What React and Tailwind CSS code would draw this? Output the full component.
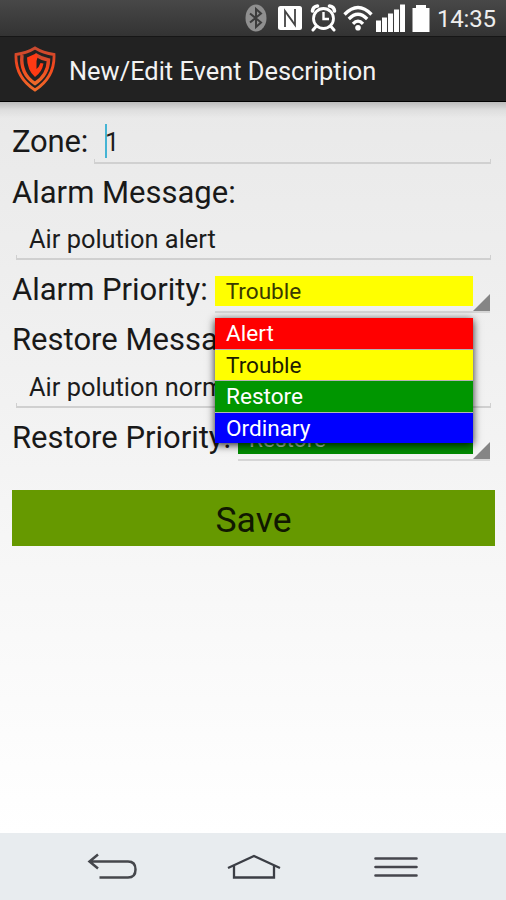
const options = [
  { label: 'Alert', className: 'bg-[#ff0000] text-white' },
  { label: 'Trouble', className: 'bg-[#ffff00] text-[#1c1c00]' },
  { label: 'Restore', className: 'bg-[#009600] text-white' },
  { label: 'Ordinary', className: 'bg-[#0000ff] text-white' },
];

const StatusBar = () => (
  <div className="flex h-9 items-center justify-end bg-gradient-to-b from-[#484848] to-[#333333] pr-[9px] text-white">
    {/* Bluetooth */}
    <svg className="mr-[10px] h-[28px] w-[22px]" viewBox="0 0 22 28">
      <ellipse cx="11" cy="14" rx="10.5" ry="13.5" fill="#8f8f8f" />
      <path d="M5 9.5 L16 18.5 L11 23 V5 L16 9.5 L5 18.5" fill="none" stroke="#3c3c3c" strokeWidth="2" />
    </svg>
    {/* NFC */}
    <svg className="mr-[7px] h-[26px] w-[26px]" viewBox="0 0 26 26">
      <rect x="1" y="1" width="24" height="24" rx="2.5" fill="#fff" />
      <path d="M8 22 V6 L16 17 M18 4 V20 L10 9" fill="none" stroke="#444444" strokeWidth="1.8" />
    </svg>
    {/* Alarm */}
    <svg className="mr-[6px] h-[28px] w-[27px]" viewBox="0 0 27 28" fill="none" stroke="#fff">
      <circle cx="13.5" cy="14.5" r="10" strokeWidth="2.8" />
      <path d="M13.5 8 V15 H19" strokeWidth="2.4" />
      <path d="M2.5 7 Q3 2.5 7.5 2 M24.5 7 Q24 2.5 19.5 2" strokeWidth="3.6" strokeLinecap="round" />
      <path d="M6 22.5 L3 26 M21 22.5 L24 26" strokeWidth="3" strokeLinecap="round" />
    </svg>
    {/* Wifi */}
    <svg className="mr-[3px] h-[26px] w-[30px]" viewBox="0 0 30 26" fill="none" stroke="#fff" strokeWidth="3.3">
      <path d="M1.5 9.5 Q15 -4.5 28.5 9.5" />
      <path d="M5.8 14 Q15 4.5 24.2 14" />
      <path d="M10 18.8 Q15 13.5 20 18.8" />
      <circle cx="15" cy="22.8" r="2.8" fill="#fff" stroke="none" />
    </svg>
    {/* Signal */}
    <svg className="mr-[7px] h-[28px] w-[29px]" viewBox="0 0 28 28" preserveAspectRatio="none" fill="#fff">
      <rect x="0" y="16.5" width="4.8" height="11.5" />
      <rect x="5.8" y="13.5" width="4.8" height="14.5" />
      <rect x="11.6" y="9.5" width="4.8" height="18.5" />
      <rect x="17.4" y="5.5" width="4.8" height="22.5" />
      <rect x="23.2" y="0.5" width="4.8" height="27.5" />
    </svg>
    {/* Battery */}
    <svg className="mr-[7px] h-[27px] w-[18px]" viewBox="0 0 18 27" fill="#fff">
      <rect x="4" y="0" width="10" height="5" />
      <rect x="0.5" y="3" width="17" height="24" />
    </svg>
    <span className="w-[60px] pt-0.5 text-[24px] leading-8 tracking-[-0.2px] whitespace-nowrap text-[#eeeeee]">14:35</span>
  </div>
);

const ActionBar = () => (
  <div className="flex h-[66px] items-center border-t border-b border-t-[#161616] border-b-black bg-[#222222] pl-[14px]">
    <svg className="mr-[13px] h-[46px] w-[42px]" viewBox="0 0 42 46" fill="none">
      <defs>
        <linearGradient id="shield" x1="0" y1="0" x2="0" y2="1">
          <stop offset="0" stopColor="#c84a30" />
          <stop offset="0.45" stopColor="#f4471d" />
          <stop offset="1" stopColor="#ee6a2a" />
        </linearGradient>
      </defs>
      <path d="M21 2 Q29 7 40 8.5 Q41 31 21 44 Q1 31 2 8.5 Q13 7 21 2 Z" stroke="url(#shield)" strokeWidth="2.8" />
      <path d="M8 9 Q6 28 21 37.5 Q34 29 34.5 14 Q27 12.5 21 8.5" stroke="url(#shield)" strokeWidth="3.4" />
      <path d="M22 7.5 L13 11.5 Q13 24 21 31 Q28 26 29.5 17.5 L26.5 17 Q25 21 22.5 23 V15 L24 10 Z" fill="#ff3a14" />
    </svg>
    <h1 className="pt-[3px] text-[25.4px] leading-8 whitespace-nowrap text-[#f3f3f3]">New/Edit Event Description</h1>
  </div>
);

const Label = ({ children }) => (
  <label className="shrink-0 text-[31px] leading-[52px] whitespace-nowrap text-[#191919]">{children}</label>
);

const Underline = () => <div className="h-[5px] border-x border-b-2 border-[#d0d0d0]" />;

const TextField = ({ children }) => (
  <div className="mr-[3px] ml-1 flex h-12 flex-col">
    <span className="h-[39px] pl-[13px] text-[25.4px] leading-[47px] whitespace-nowrap text-[#1c1c1c]">{children}</span>
    <Underline />
  </div>
);

const Spinner = ({ className, children }) => (
  <div className="mr-1 flex h-[49px] min-w-0 flex-1 items-end border-b-2 border-[#d6d6d6]">
    <div className={`mb-[5px] h-[30px] flex-1 pl-[11px] text-[22.6px] leading-[32px] ${className}`}>{children}</div>
    <svg className="h-[17px] w-[17px]" viewBox="0 0 17 17">
      <path d="M17 0 V17 H0 Z" fill="#858585" />
    </svg>
  </div>
);

const PriorityMenu = () => (
  <ul className="absolute top-[54px] left-[203px] z-10 w-[258px] bg-[#b4b4b4] shadow-[0_2px_8px_rgba(0,0,0,0.85)]">
    {options.map((option) => (
      <li
        key={option.label}
        className={`mb-[1px] h-[30.5px] pl-[11px] text-[22.6px] leading-[32px] last:mb-0 ${option.className}`}
      >
        {option.label}
      </li>
    ))}
  </ul>
);

const NavigationBar = () => (
  <div className="grid h-[67px] grid-cols-[167px_54px_1fr] items-center bg-[#e8ecef] pl-[60px]">
    <svg className="ml-[27px] h-[28px] w-[51px]" viewBox="0 0 51 28" fill="none" stroke="#45474c" strokeWidth="2.5">
      <path d="M11 1.5 L2.5 8.5 L11 15.5 M2.5 8.5 H41 Q48.5 8.5 48.5 16.5 T41 24.5 H12.5" />
    </svg>
    <svg className="h-[28px] w-[54px]" viewBox="0 0 54 28" fill="none" stroke="#3b3e45" strokeWidth="2.3">
      <path d="M1 15 L27 3 L53 15 M7 13 V24.5 H47 V13" />
    </svg>
    <svg className="ml-[92px] h-[28px] w-[46px]" viewBox="0 0 46 28" stroke="#45464d" strokeWidth="2.6" strokeLinecap="round">
      <path d="M2.5 5.5 H43.5 M2.5 14 H43.5 M2.5 22.5 H43.5" />
    </svg>
  </div>
);

const App = () => {
  return (
    <div className="flex h-[900px] w-[506px] flex-col overflow-hidden font-['Roboto',sans-serif]">
      <StatusBar />
      <ActionBar />
      <main className="flex-1 bg-gradient-to-b from-[#e9e9e9] to-white px-3">
        <div className="-mx-3 h-4 bg-gradient-to-b from-black/20 via-black/5 to-transparent" />
        <div className="flex h-[49px]">
          <label className="text-[31px] leading-[47px] tracking-[-0.2px] text-[#191919]">Zone:</label>
          <div className="mr-[3px] ml-[6px] flex flex-1 flex-col">
            <div className="flex h-[41px] items-center pl-[11px]">
              <span className="mt-1 h-[34px] w-[2px] bg-[#45b4d4]" />
              <span className="mt-1.5 -ml-[2px] text-[25.4px] leading-10 text-[#1c1c1c]">1</span>
            </div>
            <Underline />
          </div>
        </div>
        <div className="h-[49px]">
          <Label>Alarm Message:</Label>
        </div>
        <TextField>Air polution alert</TextField>
        <div className="relative flex h-[50px]">
          <Label>Alarm Priority:</Label>
          <div className="ml-[7px] flex flex-1">
            <Spinner className="bg-[#ffff00] text-[#3a3a00]">Trouble</Spinner>
          </div>
          <PriorityMenu />
        </div>
        <div className="h-[50px]">
          <Label>Restore Message:</Label>
        </div>
        <TextField>Air polution normal</TextField>
        <div className="flex h-[50px]">
          <Label>Restore Priority:</Label>
          <div className="ml-[7px] flex flex-1">
            <Spinner className="bg-[#008a00] text-[#b5d8b5]">Restore</Spinner>
          </div>
        </div>
        <button className="mt-[28px] -mr-[1px] block h-[56px] w-[483px] bg-[#669900] text-[35.5px] leading-[60px] text-[#101800]">
          Save
        </button>
      </main>
      <NavigationBar />
    </div>
  );
};

export default App;
